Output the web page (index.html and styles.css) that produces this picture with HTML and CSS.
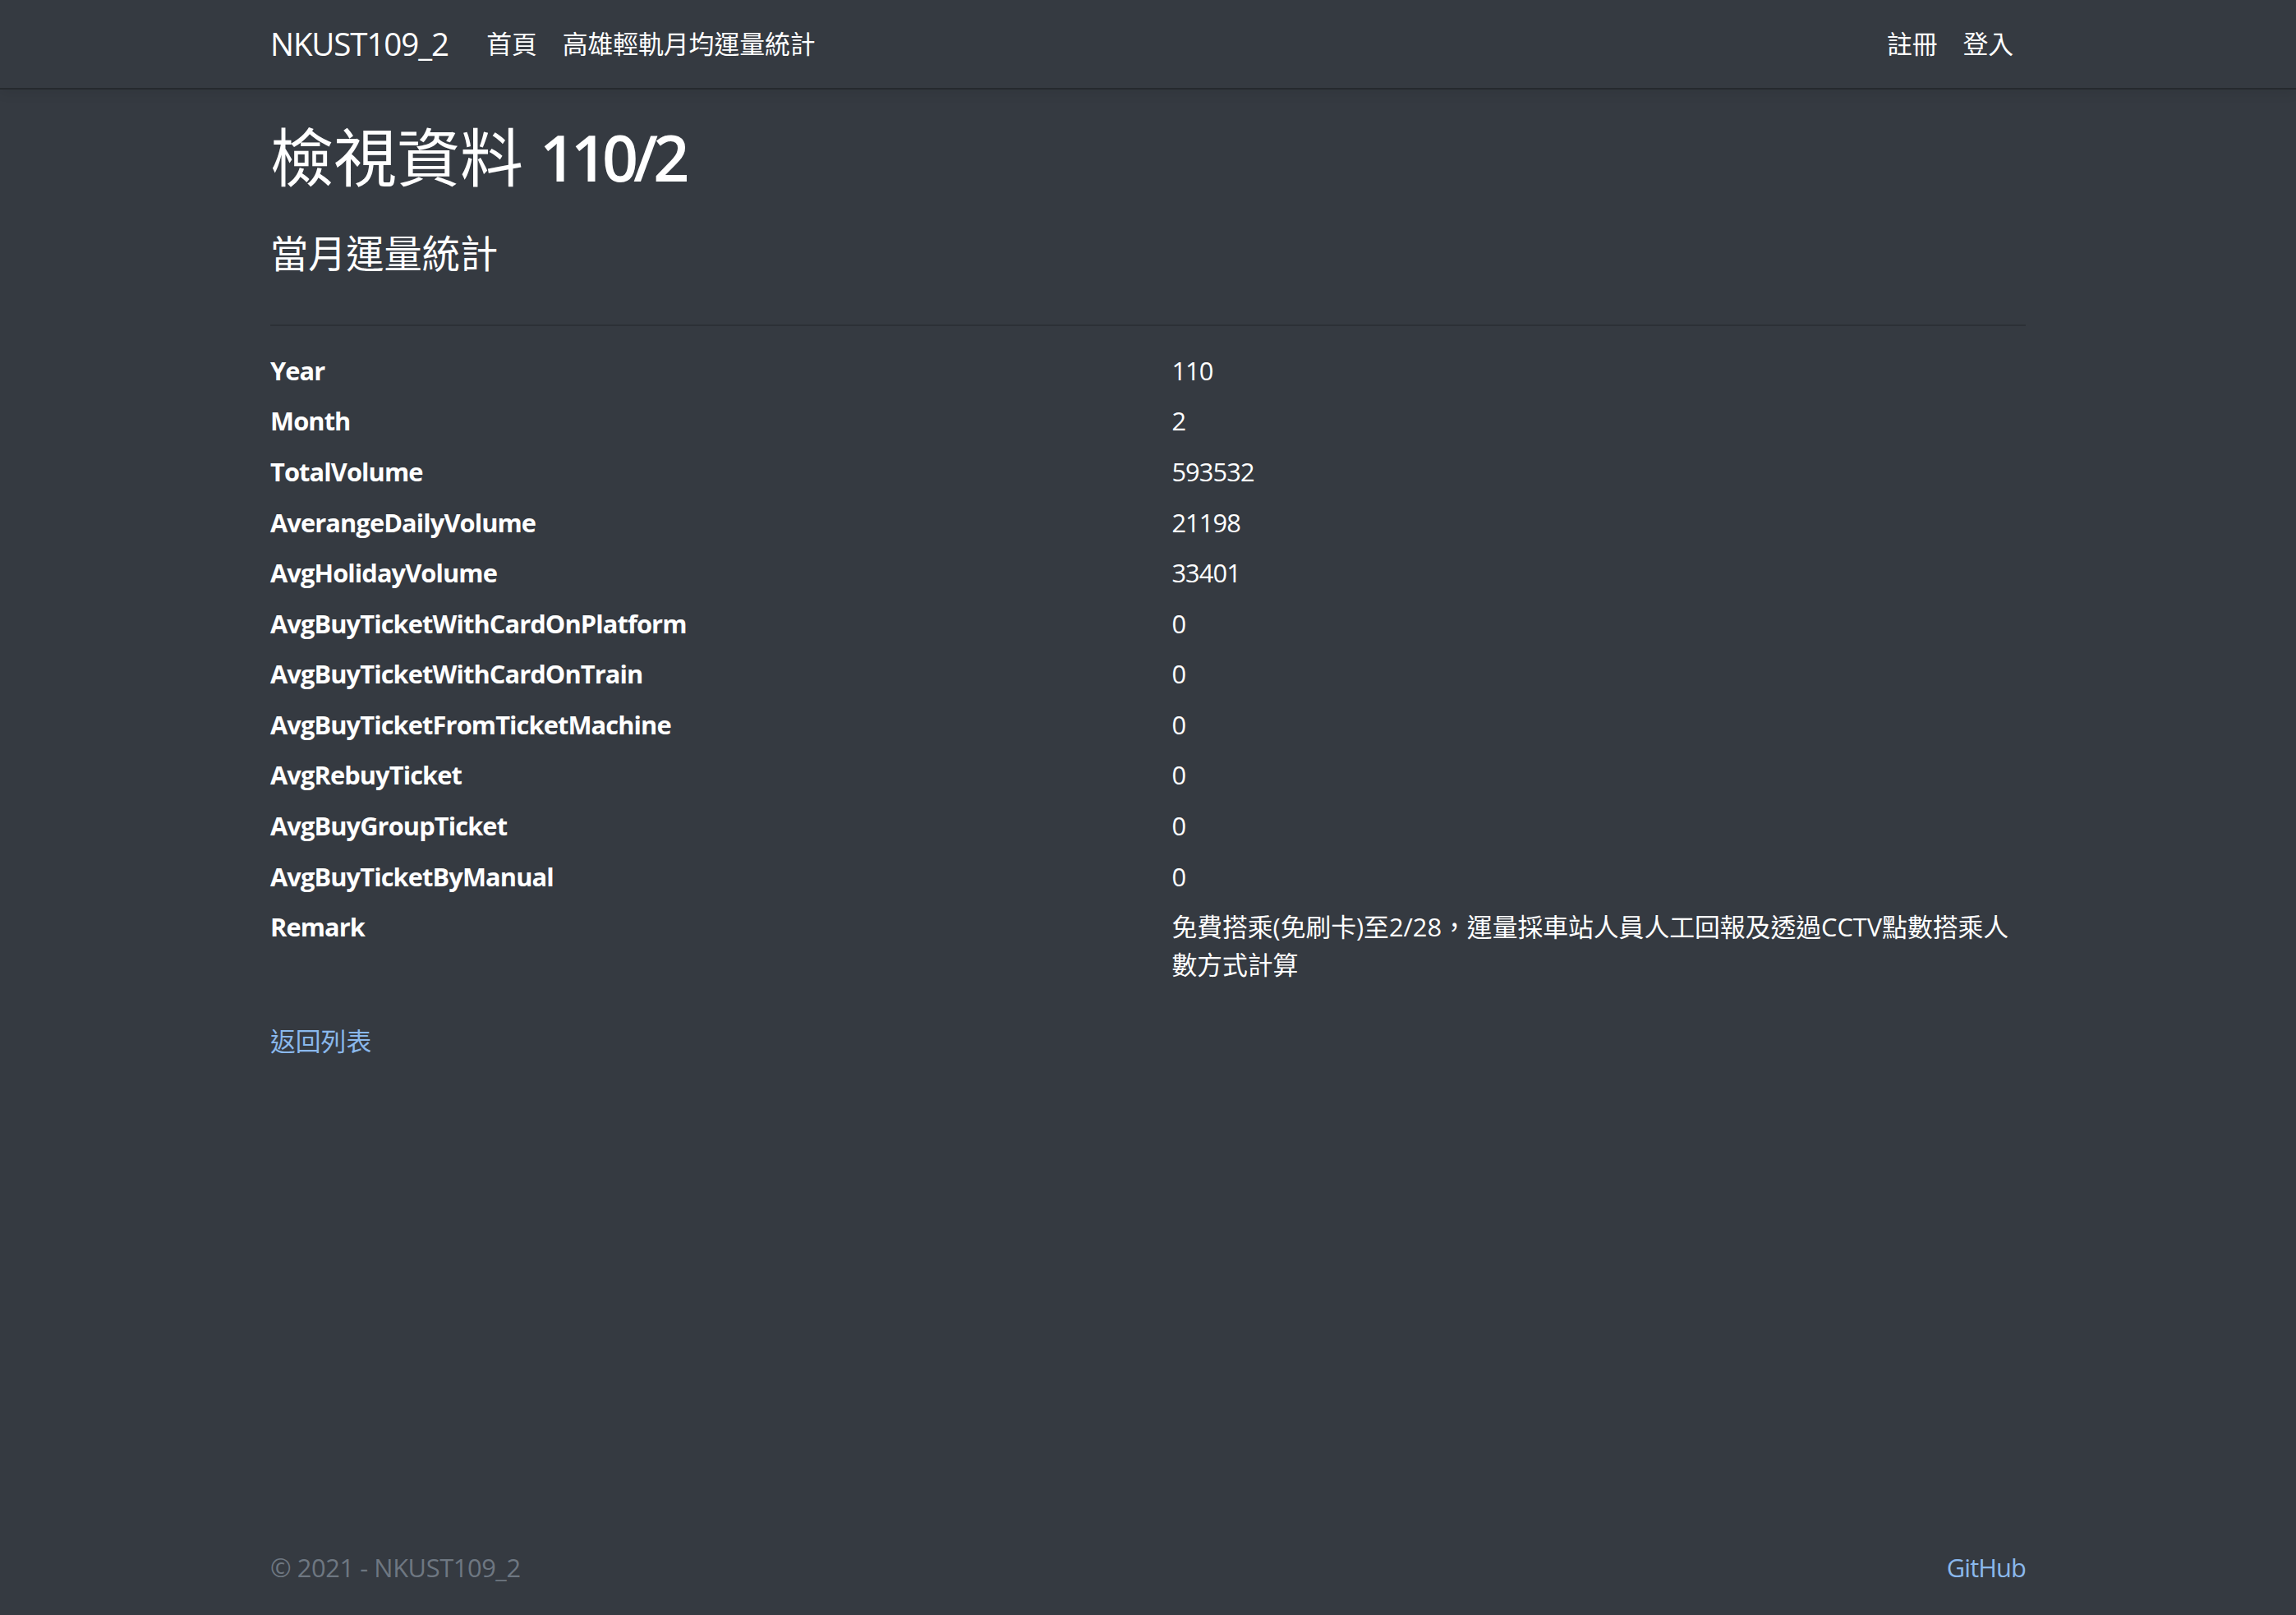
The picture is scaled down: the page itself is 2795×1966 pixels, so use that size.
FILE: index.html
```html
<!DOCTYPE html>
<html lang="zh-Hant">
<head>
<meta charset="utf-8">
<title>檢視資料 110/2 - NKUST109_2</title>
<link rel="stylesheet" href="styles.css">
</head>
<body>
<header class="navbar">
  <div class="container nav-inner">
    <a class="brand" href="#">NKUST109_2</a>
    <ul class="nav-links">
      <li><a class="nav-link" href="#">首頁</a></li>
      <li><a class="nav-link" href="#">高雄輕軌月均運量統計</a></li>
    </ul>
    <ul class="nav-links nav-right">
      <li><a class="nav-link" href="#">註冊</a></li>
      <li><a class="nav-link" href="#">登入</a></li>
    </ul>
  </div>
</header>
<main class="container main">
  <h1 class="title">檢視資料 <span class="title-num">110/2</span></h1>
  <div>
    <h4 class="subtitle">當月運量統計</h4>
    <hr class="divider">
    <dl class="details">
      <dt>Year</dt><dd class="num">110</dd>
      <dt>Month</dt><dd class="num">2</dd>
      <dt>TotalVolume</dt><dd class="num">593532</dd>
      <dt>AverangeDailyVolume</dt><dd class="num">21198</dd>
      <dt>AvgHolidayVolume</dt><dd class="num">33401</dd>
      <dt>AvgBuyTicketWithCardOnPlatform</dt><dd class="num">0</dd>
      <dt>AvgBuyTicketWithCardOnTrain</dt><dd class="num">0</dd>
      <dt>AvgBuyTicketFromTicketMachine</dt><dd class="num">0</dd>
      <dt>AvgRebuyTicket</dt><dd class="num">0</dd>
      <dt>AvgBuyGroupTicket</dt><dd class="num">0</dd>
      <dt>AvgBuyTicketByManual</dt><dd class="num">0</dd>
      <dt>Remark</dt><dd class="remark">免費搭乘(免刷卡)至2/28，運量採車站人員人工回報及透過CCTV點數搭乘人數方式計算</dd>
    </dl>
  </div>
  <div class="back">
    <a class="link" href="#">返回列表</a>
  </div>
</main>
<footer class="footer">
  <div class="container footer-inner">
    <span class="muted">© 2021 - NKUST109_2</span>
    <a class="link github" href="#">GitHub</a>
  </div>
</footer>
</body>
</html>
```

FILE: styles.css
```css
html, body {
  margin: 0;
  padding: 0;
}
body {
  background: #353a41;
  color: #ffffff;
  font-family: "Open Sans", "Noto Sans CJK TC", sans-serif;
  font-size: 30.8px;
  line-height: 1.5;
  min-height: 100vh;
  display: flex;
  flex-direction: column;
}
a {
  text-decoration: none;
}
.container {
  width: 2137px;
  margin: 0 auto;
  box-sizing: border-box;
}
.navbar {
  height: 107px;
  border-bottom: 2px solid #25292e;
  box-shadow: 0 4px 14px rgba(0, 0, 0, 0.08);
  display: flex;
  align-items: center;
}
.nav-inner {
  display: flex;
  align-items: center;
}
.brand {
  color: #ffffff;
  font-size: 38.5px;
  letter-spacing: -1.1px;
  margin-right: 31px;
  line-height: 1.5;
}
.nav-links {
  list-style: none;
  margin: 0;
  padding: 0;
  display: flex;
}
.nav-right {
  margin-left: auto;
}
.nav-link {
  color: #ffffff;
  padding: 0 15.4px;
  display: block;
}
.nav-right li:last-child .nav-link {
  padding-right: 15px;
}
.main {
  padding-top: 37px;
  flex: 1;
}
.title {
  font-size: 77px;
  font-weight: 400;
  line-height: 1.2;
  margin: 0 0 43px;
}
.title-num {
  font-weight: 600;
  letter-spacing: -6px;
}
.subtitle {
  font-size: 46.2px;
  font-weight: 400;
  line-height: 1.2;
  margin: 0;
}
.divider {
  border: 0;
  border-top: 2px solid #2c3036;
  margin: 58px 0 31px;
}
.details {
  display: grid;
  grid-template-columns: 1fr 1fr;
  column-gap: 57.75px;
  margin: 0 0 30.8px;
}
.details dt {
  font-weight: 700;
  letter-spacing: -0.9px;
  margin: 0;
}
.details dd {
  margin: 0 0 15.4px;
}
.details .num {
  letter-spacing: -0.9px;
}
.back {
  margin: 0;
}
.link {
  color: #8ab8ec;
}
.github {
  letter-spacing: -0.9px;
}
.footer {
  line-height: 115px;
  padding-top: 3px;
}
.footer-inner {
  display: flex;
  justify-content: space-between;
}
.muted {
  color: #6e7781;
  letter-spacing: -0.4px;
}
```
